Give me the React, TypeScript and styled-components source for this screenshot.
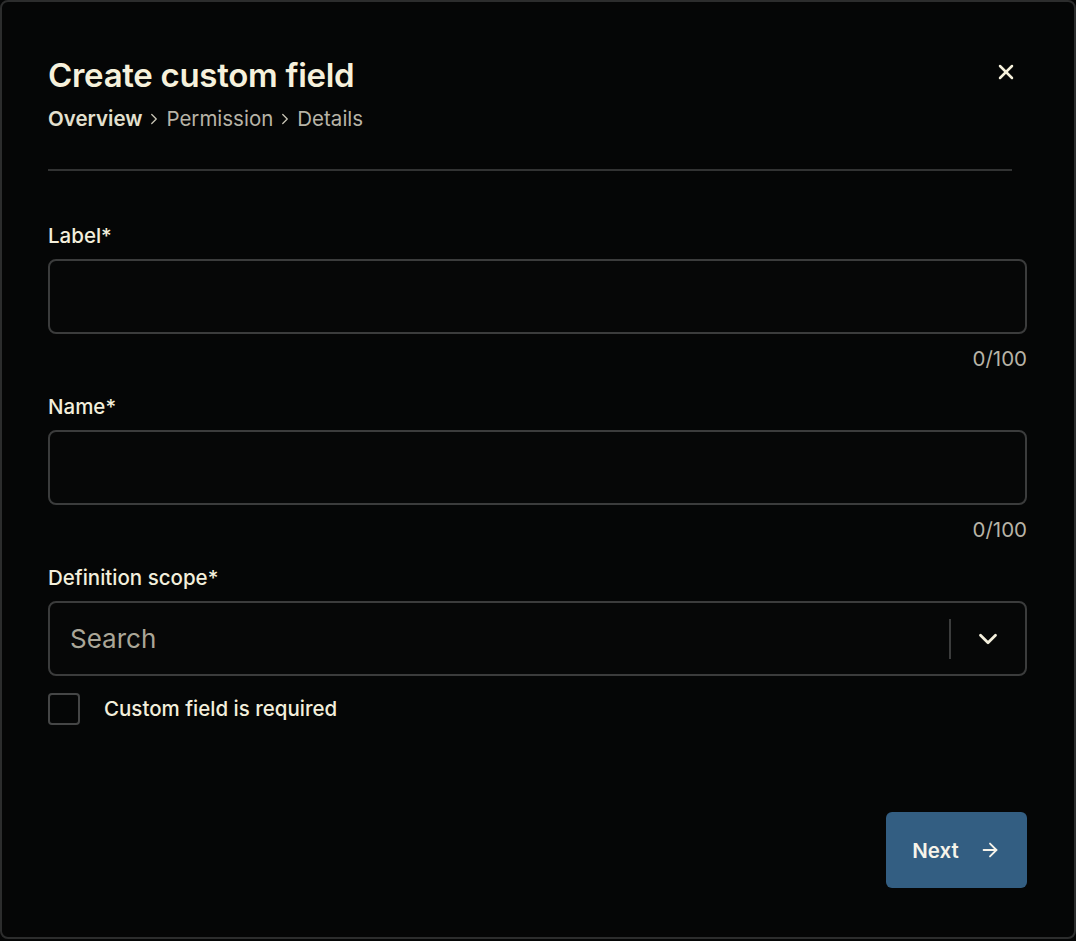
import styled, { createGlobalStyle } from "styled-components";
import { X, ChevronDown, ChevronRight, ArrowRight } from "lucide-react";

const GlobalStyle = createGlobalStyle`
  html, body {
    margin: 0;
    padding: 0;
    background: #050606;
  }
  * {
    box-sizing: border-box;
  }
  body {
    font-family: Inter, "Noto Sans", sans-serif;
  }
`;

const Modal = styled.div`
  width: 1076px;
  height: 939px;
  border: 2px solid #2c2d2d;
  border-radius: 8px;
  background: #050606;
  padding: 52px 47px 49px 46px;
  display: flex;
  flex-direction: column;
`;

const Header = styled.div`
  display: flex;
  justify-content: space-between;
  align-items: flex-start;
  padding-right: 9px;
`;

const HeaderText = styled.div`
  display: flex;
  flex-direction: column;
  gap: 9px;
`;

const Title = styled.h2`
  margin: 0;
  font-size: 33px;
  line-height: 42px;
  font-weight: 600;
  color: #f6f1dc;
  letter-spacing: -0.3px;
`;

const Crumbs = styled.div`
  display: flex;
  align-items: center;
  gap: 3px;
  font-size: 20.5px;
  line-height: 28px;
`;

interface CrumbProps {
  $active?: boolean;
}

const Crumb = styled.span<CrumbProps>`
  color: ${({ $active }) => ($active ? "#e4e0cf" : "#b8b4a7")};
  font-weight: ${({ $active }) => ($active ? 600 : 400)};
`;

const CrumbSep = styled(ChevronRight)`
  color: #c9c5b6;
`;

const CloseBtn = styled.button`
  background: transparent;
  border: none;
  padding: 0;
  margin-top: 6px;
  color: #f6f1dc;
  cursor: pointer;
  display: flex;
`;

const Divider = styled.hr`
  border: none;
  height: 2px;
  background: #323333;
  margin: 36px 15px 0 0;
`;

const Form = styled.div`
  display: flex;
  flex-direction: column;
  margin-top: 51px;
`;

const Field = styled.div`
  display: flex;
  flex-direction: column;
  margin-bottom: 20px;
`;

const Label = styled.label`
  font-size: 20.5px;
  line-height: 28px;
  font-weight: 500;
  color: #f3efdc;
  margin-bottom: 9px;
`;

const Input = styled.input`
  height: 75px;
  width: 100%;
  border: 2px solid #3b3c3c;
  border-radius: 8px;
  background: #060707;
  color: #f3efdc;
  font-family: inherit;
  font-size: 24px;
  padding: 0 20px;
  outline: none;
`;

const Counter = styled.div`
  align-self: flex-end;
  margin-top: 11px;
  font-size: 20.5px;
  line-height: 28px;
  color: #b8b4a7;
`;

const Select = styled.div`
  height: 75px;
  border: 2px solid #3b3c3c;
  border-radius: 8px;
  background: #060707;
  display: flex;
  align-items: center;
  padding-left: 20px;
`;

const SearchInput = styled.input`
  flex: 1;
  background: transparent;
  border: none;
  outline: none;
  padding: 0;
  font-family: inherit;
  font-size: 26px;
  color: #f3efdc;

  &::placeholder {
    color: #aaa697;
  }
`;

const VSep = styled.span`
  width: 2px;
  height: 40px;
  background: #3b3c3c;
`;

const Caret = styled.span`
  width: 74px;
  display: flex;
  justify-content: center;
  color: #f3efdc;
`;

const CheckRow = styled.label`
  display: flex;
  align-items: center;
  gap: 24px;
  margin-top: 17px;
  font-size: 20.5px;
  line-height: 28px;
  font-weight: 500;
  color: #f3efdc;
  cursor: pointer;
`;

const Box = styled.span`
  width: 32px;
  height: 32px;
  border: 2px solid #454646;
  border-radius: 4px;
`;

const Footer = styled.div`
  margin-top: auto;
  display: flex;
  justify-content: flex-end;
`;

const NextBtn = styled.button`
  width: 141px;
  height: 76px;
  border: none;
  border-radius: 6px;
  background: #335e82;
  color: #f7f4ea;
  font-family: inherit;
  font-size: 20.5px;
  font-weight: 600;
  display: flex;
  align-items: center;
  justify-content: center;
  gap: 20px;
  cursor: pointer;
`;

export default function App() {
  return (
    <>
      <GlobalStyle />
      <Modal>
        <Header>
          <HeaderText>
            <Title>Create custom field</Title>
            <Crumbs>
              <Crumb $active>Overview</Crumb>
              <CrumbSep size={18} strokeWidth={1.75} />
              <Crumb>Permission</Crumb>
              <CrumbSep size={18} strokeWidth={1.75} />
              <Crumb>Details</Crumb>
            </Crumbs>
          </HeaderText>
          <CloseBtn aria-label="Close">
            <X size={24} strokeWidth={2.5} />
          </CloseBtn>
        </Header>
        <Divider />

        <Form>
          <Field>
            <Label>Label*</Label>
            <Input />
            <Counter>0/100</Counter>
          </Field>
          <Field>
            <Label>Name*</Label>
            <Input />
            <Counter>0/100</Counter>
          </Field>
          <Field>
            <Label>Definition scope*</Label>
            <Select>
              <SearchInput placeholder="Search" />
              <VSep />
              <Caret>
                <ChevronDown size={30} strokeWidth={2.25} />
              </Caret>
            </Select>
            <CheckRow>
              <Box />
              Custom field is required
            </CheckRow>
          </Field>
        </Form>

        <Footer>
          <NextBtn>
            Next
            <ArrowRight size={22} strokeWidth={2} />
          </NextBtn>
        </Footer>
      </Modal>
    </>
  );
}
